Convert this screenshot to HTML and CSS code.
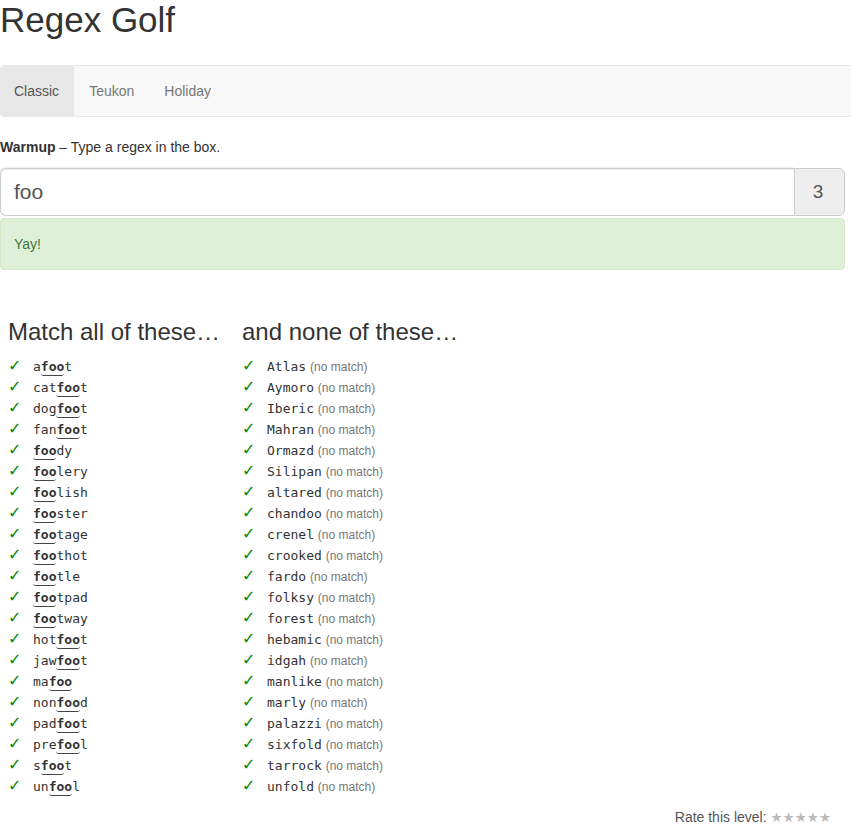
FILE: index.html
```html
<!DOCTYPE html>
<html>
<head>
<meta charset="utf-8">
<title>Regex Golf</title>
<link rel="stylesheet" href="styles.css">
</head>
<body>
<h1 class="title">Regex Golf</h1>
<nav class="navbar">
  <a class="nav-link active" href="#">Classic</a>
  <a class="nav-link" href="#">Teukon</a>
  <a class="nav-link" href="#">Holiday</a>
</nav>
<main class="content">
  <p class="intro"><b>Warmup</b> – Type a regex in the box.</p>
  <div class="input-group">
    <input class="regex-input" type="text" value="foo">
    <span class="addon">3</span>
  </div>
  <div class="alert">Yay!</div>
  <div class="columns">
    <section class="col">
      <h3 class="col-title">Match all of these…</h3>
      <ul class="words">
        <li><span class="ok">✓</span><code>a<u>foo</u>t</code></li>
        <li><span class="ok">✓</span><code>cat<u>foo</u>t</code></li>
        <li><span class="ok">✓</span><code>dog<u>foo</u>t</code></li>
        <li><span class="ok">✓</span><code>fan<u>foo</u>t</code></li>
        <li><span class="ok">✓</span><code><u>foo</u>dy</code></li>
        <li><span class="ok">✓</span><code><u>foo</u>lery</code></li>
        <li><span class="ok">✓</span><code><u>foo</u>lish</code></li>
        <li><span class="ok">✓</span><code><u>foo</u>ster</code></li>
        <li><span class="ok">✓</span><code><u>foo</u>tage</code></li>
        <li><span class="ok">✓</span><code><u>foo</u>thot</code></li>
        <li><span class="ok">✓</span><code><u>foo</u>tle</code></li>
        <li><span class="ok">✓</span><code><u>foo</u>tpad</code></li>
        <li><span class="ok">✓</span><code><u>foo</u>tway</code></li>
        <li><span class="ok">✓</span><code>hot<u>foo</u>t</code></li>
        <li><span class="ok">✓</span><code>jaw<u>foo</u>t</code></li>
        <li><span class="ok">✓</span><code>ma<u>foo</u></code></li>
        <li><span class="ok">✓</span><code>non<u>foo</u>d</code></li>
        <li><span class="ok">✓</span><code>pad<u>foo</u>t</code></li>
        <li><span class="ok">✓</span><code>pre<u>foo</u>l</code></li>
        <li><span class="ok">✓</span><code>s<u>foo</u>t</code></li>
        <li><span class="ok">✓</span><code>un<u>foo</u>l</code></li>
      </ul>
    </section>
    <section class="col">
      <h3 class="col-title">and none of these…</h3>
      <ul class="words">
        <li><span class="ok">✓</span><code>Atlas</code> <span class="nm">(no match)</span></li>
        <li><span class="ok">✓</span><code>Aymoro</code> <span class="nm">(no match)</span></li>
        <li><span class="ok">✓</span><code>Iberic</code> <span class="nm">(no match)</span></li>
        <li><span class="ok">✓</span><code>Mahran</code> <span class="nm">(no match)</span></li>
        <li><span class="ok">✓</span><code>Ormazd</code> <span class="nm">(no match)</span></li>
        <li><span class="ok">✓</span><code>Silipan</code> <span class="nm">(no match)</span></li>
        <li><span class="ok">✓</span><code>altared</code> <span class="nm">(no match)</span></li>
        <li><span class="ok">✓</span><code>chandoo</code> <span class="nm">(no match)</span></li>
        <li><span class="ok">✓</span><code>crenel</code> <span class="nm">(no match)</span></li>
        <li><span class="ok">✓</span><code>crooked</code> <span class="nm">(no match)</span></li>
        <li><span class="ok">✓</span><code>fardo</code> <span class="nm">(no match)</span></li>
        <li><span class="ok">✓</span><code>folksy</code> <span class="nm">(no match)</span></li>
        <li><span class="ok">✓</span><code>forest</code> <span class="nm">(no match)</span></li>
        <li><span class="ok">✓</span><code>hebamic</code> <span class="nm">(no match)</span></li>
        <li><span class="ok">✓</span><code>idgah</code> <span class="nm">(no match)</span></li>
        <li><span class="ok">✓</span><code>manlike</code> <span class="nm">(no match)</span></li>
        <li><span class="ok">✓</span><code>marly</code> <span class="nm">(no match)</span></li>
        <li><span class="ok">✓</span><code>palazzi</code> <span class="nm">(no match)</span></li>
        <li><span class="ok">✓</span><code>sixfold</code> <span class="nm">(no match)</span></li>
        <li><span class="ok">✓</span><code>tarrock</code> <span class="nm">(no match)</span></li>
        <li><span class="ok">✓</span><code>unfold</code> <span class="nm">(no match)</span></li>
      </ul>
    </section>
  </div>
  <div class="rate">Rate this level: <span class="stars">★★★★★</span></div>
</main>
</body>
</html>
```

FILE: styles.css
```css
html, body {
  margin: 0;
  padding: 0;
  background: #fff;
}
body {
  font-family: "Liberation Sans", Arial, sans-serif;
  font-size: 14px;
  line-height: 20px;
  color: #333;
}
.title {
  font-size: 35px;
  font-weight: 500;
  line-height: 39px;
  margin: 0 0 26px 0;
  color: #333;
}
.navbar {
  display: flex;
  height: 50px;
  background: #f8f8f8;
  border-top: 1px solid #e7e7e7;
  border-bottom: 1px solid #e7e7e7;
  border-radius: 4px 0 0 4px;
}
.nav-link {
  display: block;
  padding: 15px 15px;
  line-height: 20px;
  color: #777;
  text-decoration: none;
}
.nav-link:first-child {
  padding-left: 14px;
}
.nav-link.active {
  background: #e7e7e7;
  color: #555;
  border-radius: 4px 0 0 4px;
}
.content {
  width: 845px;
}
.intro {
  margin: 20px 0 11px 0;
}
.intro b {
  font-weight: 700;
}
.input-group {
  display: flex;
  height: 48px;
}
.regex-input {
  flex: 1;
  min-width: 0;
  box-sizing: border-box;
  height: 48px;
  margin: 0;
  padding: 10px 13px;
  font-family: "Liberation Sans", Arial, sans-serif;
  font-size: 21px;
  color: #555;
  border: 1px solid #ccc;
  border-right: none;
  border-radius: 6px 0 0 6px;
  box-shadow: inset 0 1px 1px rgba(0,0,0,.075), 0 -1px 2px rgba(0,0,0,0.06);
  outline: none;
}
.addon {
  box-sizing: border-box;
  width: 51px;
  height: 48px;
  display: flex;
  align-items: center;
  justify-content: center;
  background: #eee;
  border: 1px solid #ccc;
  border-radius: 0 6px 6px 0;
  font-size: 19px;
  color: #555;
  padding-right: 3px;
}
.alert {
  margin-top: 2px;
  padding: 15px 13px;
  background: #dff0d8;
  border: 1px solid #d6e9c6;
  border-radius: 4px;
  color: #3c763d;
}
.columns {
  display: flex;
  margin-top: 49px;
}
.col {
  box-sizing: border-box;
  width: 234px;
  padding-left: 8px;
}
.col-title {
  font-size: 24px;
  font-weight: 500;
  line-height: 26px;
  margin: 0 0 10px 0;
  white-space: nowrap;
}
.words {
  list-style: none;
  margin: 0;
  padding: 0;
}
.words li {
  height: 21px;
  line-height: 21px;
  white-space: nowrap;
}
.ok {
  display: inline-block;
  width: 25px;
  color: #080;
  font-family: "DejaVu Sans", sans-serif;
  font-size: 16px;
  font-weight: bold;
}
code {
  font-family: "DejaVu Sans Mono", monospace;
  font-size: 13px;
  color: #333;
}
code u {
  text-decoration: none;
  font-weight: bold;
  border-bottom: 1px solid #444;
  border-radius: 0 0 3px 3px;
  padding-bottom: 1px;
}
.nm {
  font-size: 12px;
  color: #777;
}
.rate {
  margin-top: 11px;
  padding-right: 14px;
  text-align: right;
  color: #555;
  font-size: 14px;
}
.stars {
  color: #bbb;
  font-size: 13.5px;
  font-family: "DejaVu Sans", sans-serif;
}
```
